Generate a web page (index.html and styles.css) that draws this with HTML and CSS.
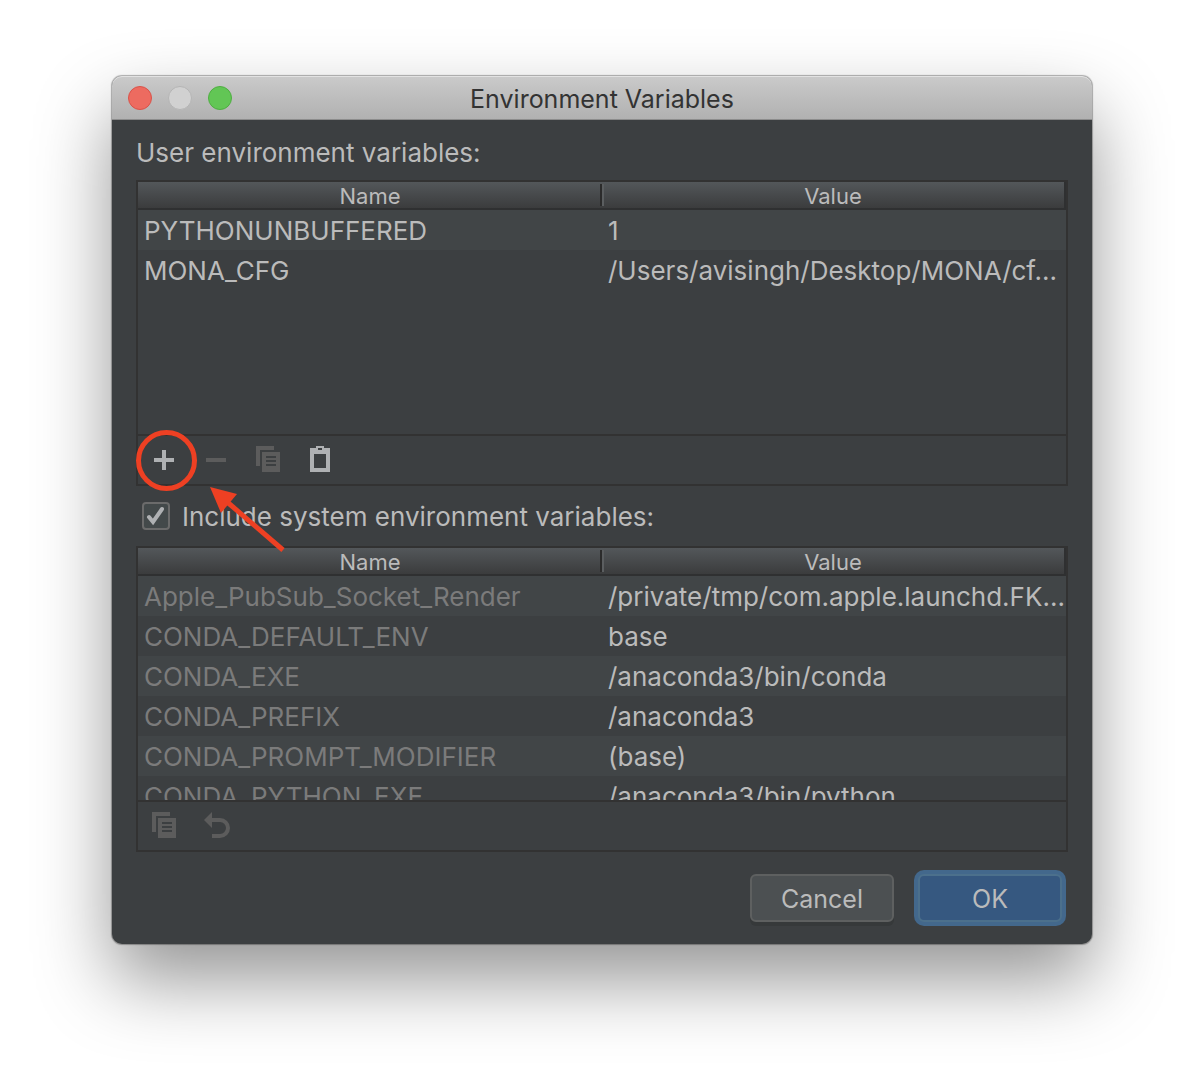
FILE: index.html
```html
<!DOCTYPE html>
<html lang="en">
<head>
<meta charset="utf-8">
<title>Environment Variables</title>
<link rel="stylesheet" href="styles.css">
</head>
<body>
<main class="window">
  <header class="titlebar">
    <div class="lights">
      <button class="light light-close" aria-label="Close"></button>
      <button class="light" aria-label="Minimize" disabled></button>
      <button class="light light-zoom" aria-label="Zoom"></button>
    </div>
    <h1 class="title">Environment Variables</h1>
  </header>
  <div class="content">
    <h2 class="label" id="user-label">User environment variables:</h2>
    <section class="panel">
      <div class="viewport">
        <table class="vars" aria-labelledby="user-label">
          <thead><tr><th>Name</th><th>Value</th></tr></thead>
          <tbody>
            <tr><td>PYTHONUNBUFFERED</td><td>1</td></tr>
            <tr><td>MONA_CFG</td><td>/Users/avisingh/Desktop/MONA/cf...</td></tr>
          </tbody>
        </table>
      </div>
      <div class="toolbar">
        <button class="tool" aria-label="Add"><svg viewBox="0 0 28 28"><path d="M12 4h4v8h8v4h-8v8h-4v-8H4v-4h8z"/></svg></button>
        <button class="tool" aria-label="Remove" disabled><svg viewBox="0 0 28 28"><path d="M4 12h20v4H4z"/></svg></button>
        <button class="tool" aria-label="Copy" disabled><svg viewBox="0 0 28 28"><path d="M2 0h18v4H6v16H2z"/><path fill-rule="evenodd" d="M8 6h18v20H8zM12 10v2h10v-2zM12 14v2h10v-2zM12 18v2h10v-2z"/></svg></button>
        <button class="tool" aria-label="Paste"><svg viewBox="0 0 28 28"><path fill-rule="evenodd" d="M4 2h6V0h8v2h6v24H4zM8 8v14h12V8zM12 2v2h4V2z"/></svg></button>
        <svg class="callout" viewBox="134 428 160 128" aria-hidden="true">
          <circle cx="166.500" cy="460.500" r="28"/>
          <path class="shaft" d="M226 501l57 49"/>
          <path class="head" d="M210 487l27 7-16 19z"/>
        </svg>
      </div>
    </section>
    <label class="check">
      <span class="box">
        <input type="checkbox" checked>
        <svg viewBox="0 0 28 28" aria-hidden="true"><path d="M7 15l4 5L20 7"/></svg>
      </span>
      <span class="check-text">Include system environment variables:</span>
    </label>
    <section class="panel">
      <div class="viewport">
        <table class="vars system" aria-label="System environment variables">
          <thead><tr><th>Name</th><th>Value</th></tr></thead>
          <tbody>
            <tr><td>Apple_PubSub_Socket_Render</td><td>/private/tmp/com.apple.launchd.FK...</td></tr>
            <tr><td>CONDA_DEFAULT_ENV</td><td>base</td></tr>
            <tr><td>CONDA_EXE</td><td>/anaconda3/bin/conda</td></tr>
            <tr><td>CONDA_PREFIX</td><td>/anaconda3</td></tr>
            <tr><td>CONDA_PROMPT_MODIFIER</td><td>(base)</td></tr>
            <tr><td>CONDA_PYTHON_EXE</td><td>/anaconda3/bin/python</td></tr>
          </tbody>
        </table>
      </div>
      <div class="toolbar">
        <button class="tool" aria-label="Copy" disabled><svg viewBox="0 0 28 28"><path d="M2 0h18v4H6v16H2z"/><path fill-rule="evenodd" d="M8 6h18v20H8zM12 10v2h10v-2zM12 14v2h10v-2zM12 18v2h10v-2z"/></svg></button>
        <button class="tool" aria-label="Revert" disabled><svg viewBox="0 0 28 28"><path d="M2 8l8-8v16z"/><path class="curve" d="M10 8h8a8 8 0 0 1 0 16h-8"/></svg></button>
      </div>
    </section>
    <footer class="actions">
      <button class="btn">Cancel</button>
      <button class="btn btn-primary">OK</button>
    </footer>
  </div>
</main>
</body>
</html>
```
FILE: styles.css
```css
*, *::before, *::after { box-sizing: border-box; }

body {
  min-height: 100vh;
  margin: 0;
  padding: 76px 112px;
  background: #fff;
  color: #bbb;
  font: 26px/38px Inter, "Liberation Sans", sans-serif;
}

button { font: inherit; color: inherit; padding: 0; }

.window {
  border-radius: 10px;
  background: #3c3f41;
  box-shadow: 0 0 1px 1px rgba(0, 0, 0, .3), 0 36px 76px rgba(0, 0, 0, .42);
}

.titlebar {
  display: grid;
  grid-template-columns: 1fr auto 1fr;
  align-items: center;
  height: 44px;
  padding: 0 16px;
  border-bottom: 1px solid #8c8c8c;
  border-radius: 10px 10px 0 0;
  background: linear-gradient(#cacaca, #b1b1b1);
  box-shadow: inset 0 1px #e2e2e2;
}

.lights { display: flex; gap: 16px; }

.light {
  width: 24px;
  height: 24px;
  border: 1px solid #b5b5b5;
  border-radius: 50%;
  background: #d1d1d1;
}
.light-close { background: #ed6b60; border-color: #d9534a; }
.light-zoom { background: #62c655; border-color: #4fae42; }

.title { margin: 0; padding-top: 2px; font-size: 25px; font-weight: 400; color: #333; }

.content { padding: 14px 24px 18px; }

.label { margin: 0 0 8px; font-size: 26px; font-weight: 400; }

.panel { border: 2px solid #323232; }

.viewport { height: 252px; overflow: hidden; }

.vars {
  width: 100%;
  table-layout: fixed;
  border-collapse: separate;
  border-spacing: 0;
}

.vars th {
  position: relative;
  height: 28px;
  padding: 2px 0 0;
  border-bottom: 2px solid #2f3031;
  background: linear-gradient(#53575a, #3b3c3d);
  font-size: 22px;
  font-weight: 400;
  line-height: 24px;
}
.vars th:last-child { border-right: 2px solid #2f3031; }
.vars th:last-child::before {
  content: "";
  position: absolute;
  top: 2px;
  left: -2px;
  width: 4px;
  height: 22px;
  border-left: 2px solid #2b2b2b;
  border-right: 2px solid #5b5e60;
}

.vars td {
  height: 40px;
  padding: 2px 6px 0;
  overflow: hidden;
  white-space: nowrap;
}
.vars tr:nth-child(odd) td { background: #414547; }
.system td:first-child { color: #7b7b7b; }

.toolbar {
  position: relative;
  display: flex;
  height: 50px;
  border-top: 2px solid #323232;
}

.tool {
  display: grid;
  place-items: center;
  width: 52px;
  border: 0;
  background: none;
  color: #afb1b3;
}
.tool:disabled { color: #5c5c5c; }
.tool svg { width: 28px; height: 28px; fill: currentColor; }
.tool .curve { fill: none; stroke: currentColor; stroke-width: 4; }

.callout {
  position: absolute;
  z-index: 1;
  top: -8px;
  left: -4px;
  width: 160px;
  height: 128px;
  fill: none;
  stroke: #ee4023;
  stroke-width: 5;
  pointer-events: none;
}
.callout .head { fill: #ee4023; stroke: none; }

.check {
  display: flex;
  align-items: center;
  gap: 12px;
  height: 40px;
  margin: 10px 0;
  padding-left: 6px;
}
.check-text { padding-top: 2px; }

.box { display: grid; width: 28px; height: 28px; }
.box input, .box svg { grid-area: 1 / 1; width: 28px; height: 28px; margin: 0; }
.box input {
  appearance: none;
  border: 2px solid #6b6b6b;
  border-radius: 4px;
  background: #43494a;
}
.box svg {
  z-index: 1;
  fill: none;
  stroke: #afb1b3;
  stroke-width: 4;
  stroke-linecap: round;
  pointer-events: none;
}

.actions {
  display: flex;
  justify-content: flex-end;
  align-items: center;
  gap: 24px;
  padding: 22px 6px 4px;
}

.btn {
  width: 144px;
  height: 48px;
  padding-top: 2px;
  border: 2px solid #5e6060;
  border-radius: 6px;
  background: #4c5052;
  box-shadow: 0 4px #36393a;
  font-size: 25px;
}
.btn-primary {
  border-color: #4c708c;
  background: #365880;
  box-shadow: 0 0 0 4px #43688c;
}
```
